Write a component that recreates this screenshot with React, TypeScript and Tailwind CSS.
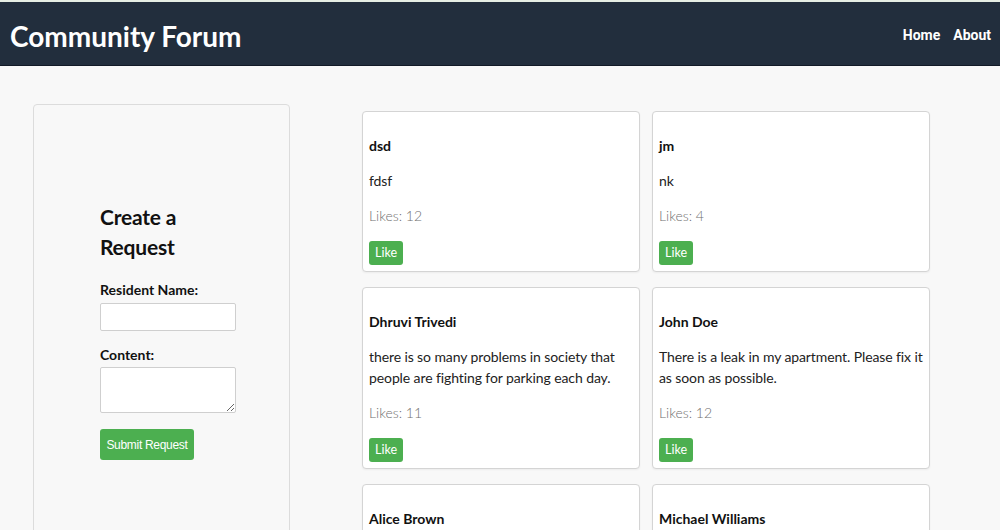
import React from "react";

type Post = { name: string; content: string; likes: number };

const posts: Post[] = [
  { name: "dsd", content: "fdsf", likes: 12 },
  { name: "jm", content: "nk", likes: 4 },
  {
    name: "Dhruvi Trivedi",
    content: "there is so many problems in society that people are fighting for parking each day.",
    likes: 11,
  },
  {
    name: "John Doe",
    content: "There is a leak in my apartment. Please fix it as soon as possible.",
    likes: 12,
  },
  { name: "Alice Brown", content: "", likes: 8 },
  { name: "Michael Williams", content: "", likes: 6 },
];

function Card({ p, full }: { p: Post; full: boolean }) {
  return (
    <div className="bg-white border border-[#d4d4d4] rounded-[4px] shadow-[0_1px_2px_rgba(0,0,0,0.05)] pl-[6px] pr-[6px] pt-[24px] pb-[6px] flex flex-col">
      <h3 className="text-[14px] leading-[20px] font-bold text-[#111]">{p.name}</h3>
      {full && (
        <>
          <p className="mt-[14px] text-[14px] leading-[21px] text-[#222] tracking-[-0.1px]">{p.content}</p>
          <p className="mt-[14px] text-[14px] leading-[21px] font-light text-[#707070]">Likes: {p.likes}</p>
          <div className="mt-[15px]">
            <button className="w-[34px] h-[24px] bg-[#4caf50] text-white text-[12.5px] rounded-[3px] flex items-center justify-center">
              Like
            </button>
          </div>
        </>
      )}
    </div>
  );
}

export default function App() {
  return (
    <div className="w-[1000px] h-[530px] overflow-hidden bg-[#f8f8f8] font-['Lato',sans-serif]">
      <div className="h-[2px] bg-[#e6eee4]" />
      <header className="h-[64px] bg-[#222e3d] border-b border-[#121a27] flex items-center justify-between pl-[10px] pr-[9px]">
        <h1 className="text-[28px] font-bold text-white tracking-[0px] mt-[4px]">Community Forum</h1>
        <nav className="flex gap-[13px] mt-[4px] font-['Roboto',sans-serif] font-bold text-[14px] text-white">
          <a>Home</a>
          <a>About</a>
        </nav>
      </header>
      <main className="flex items-start pl-[33px] gap-[72px]">
        <aside className="mt-[38px] w-[257px] h-[460px] border border-[#dcdcdc] rounded-[4px] bg-[#f8f8f8] pl-[66px] pt-[97px]">
          <div className="w-[136px]">
            <h2 className="text-[21px] leading-[30px] font-bold text-[#111] tracking-[-0.2px]">Create a Request</h2>
            <label className="block mt-[18px] text-[14px] leading-[20px] font-bold text-[#111]">Resident Name:</label>
            <input className="mt-[3px] block w-[136px] h-[28px] bg-white border border-[#cfcfcf] rounded-[2px]" />
            <label className="block mt-[14px] text-[14px] leading-[20px] font-bold text-[#111]">Content:</label>
            <textarea className="mt-[2px] block w-[136px] h-[46px] bg-white border border-[#cfcfcf] rounded-[2px]" />
            <button className="mt-[16px] w-[94px] h-[31px] bg-[#4caf50] text-white rounded-[3px] font-['Liberation_Sans',sans-serif] text-[12px] tracking-[-0.3px]">
              Submit Request
            </button>
          </div>
        </aside>
        <section className="mt-[45px] grid grid-cols-[278px_278px] gap-x-[12px] gap-y-[15px]">
          {posts.map((p, i) => (
            <Card key={p.name} p={p} full={i < 4} />
          ))}
        </section>
      </main>
    </div>
  );
}
